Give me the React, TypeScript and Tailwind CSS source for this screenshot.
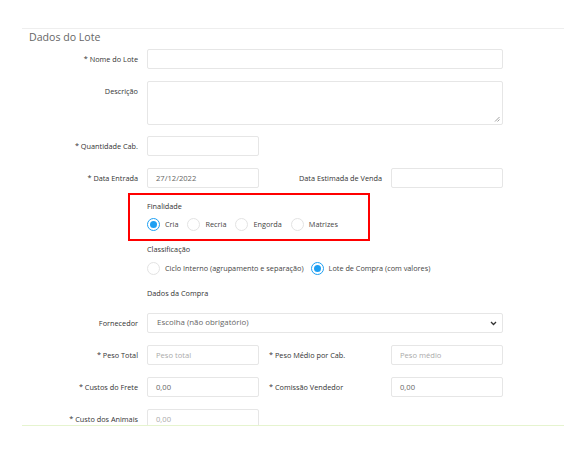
import * as React from "react"

const font = { fontFamily: '"Open Sans", "Noto Sans", sans-serif' }

function Label({ children, className = "" }: { children: React.ReactNode; className?: string }) {
  return (
    <div className={`w-[116px] shrink-0 text-right text-[7.3px] leading-[20px] text-[#333] ${className}`}>
      {children}
    </div>
  )
}

function Input({ value, placeholder, className = "w-[112px]" }: { value?: string; placeholder?: string; className?: string }) {
  return (
    <div
      className={`h-[20px] shrink-0 rounded-[2px] border border-[#e6e6e6] bg-white pl-[8px] text-[7.6px] leading-[18px] ${className} ${
        value ? "text-[#666]" : "text-[#aaa]"
      }`}
    >
      {value ?? placeholder}
    </div>
  )
}

function Radio({ label, checked = false }: { label: string; checked?: boolean }) {
  return (
    <div className="flex items-center">
      <span
        className={`flex h-[13px] w-[13px] items-center justify-center rounded-full border ${
          checked ? "border-[#1e9ff2]" : "border-[#e3e3e3]"
        }`}
      >
        {checked && <span className="h-[7px] w-[7px] rounded-full bg-[#1e9ff2]" />}
      </span>
      <span className="ml-[5px] text-[7.3px] text-[#444]">{label}</span>
    </div>
  )
}

export default function App() {
  return (
    <div className="relative h-[454px] w-[564px] overflow-hidden bg-white" style={font}>
      <div className="pl-[22px] pt-[28px]">
        <div className="h-[398px] overflow-hidden border-b border-t border-b-[#e6f4cf] border-t-[#eeeeee]">
          <div className="h-[16px] pl-[7px] text-[10.6px] leading-[16px] text-[#666]">Dados do Lote</div>

          <div className="mt-[4px] flex gap-[9px]">
            <Label>* Nome do Lote</Label>
            <Input className="w-[356px]" />
          </div>

          <div className="mt-[12px] flex gap-[9px]">
            <Label>Descrição</Label>
            <div className="relative h-[44px] w-[356px] rounded-[2px] border border-[#e6e6e6]">
              <svg className="absolute bottom-[2px] right-[2px]" width="6" height="6" viewBox="0 0 6 6">
                <path d="M5.5 1 L1 5.5 M5.5 3.5 L3.5 5.5" stroke="#888" strokeWidth="0.8" />
              </svg>
            </div>
          </div>

          <div className="mt-[11px] flex gap-[9px]">
            <Label>* Quantidade Cab.</Label>
            <Input />
          </div>

          <div className="mt-[12px] flex gap-[9px]">
            <Label>* Data Entrada</Label>
            <Input value="27/12/2022" />
            <div className="w-[114px] shrink-0 pl-[31px] text-[7.3px] leading-[20px] text-[#333]">Data Estimada de Venda</div>
            <Input />
          </div>

          <div className="ml-[125px]">
            <div className="mt-[12px] h-[12px] text-[7.3px] leading-[12px] text-[#333]">Finalidade</div>
            <div className="mt-[6px] flex gap-[9px]">
              <Radio label="Cria" checked />
              <Radio label="Recria" />
              <Radio label="Engorda" />
              <Radio label="Matrizes" />
            </div>
            <div className="mt-[12px] h-[12px] text-[7.3px] leading-[12px] text-[#333]">Classificação</div>
            <div className="mt-[7px] flex gap-[7px]">
              <Radio label="Ciclo Interno (agrupamento e separação)" />
              <Radio label="Lote de Compra (com valores)" checked />
            </div>
            <div className="mt-[12px] h-[12px] text-[7.3px] leading-[12px] text-[#333]">Dados da Compra</div>
          </div>

          <div className="mt-[14px] flex gap-[9px]">
            <Label>Fornecedor</Label>
            <div className="flex h-[20px] w-[356px] items-center justify-between rounded-[2px] border border-[#e6e6e6] pl-[9px] pr-[5px] text-[7.9px] text-[#666]">
              <span>Escolha (não obrigatório)</span>
              <svg width="7" height="5" viewBox="0 0 7 5">
                <path d="M1 1 L3.5 3.5 L6 1" fill="none" stroke="#333" strokeWidth="1.3" />
              </svg>
            </div>
          </div>

          <div className="mt-[12px] flex gap-[9px]">
            <Label>* Peso Total</Label>
            <Input placeholder="Peso total" />
            <div className="w-[114px] shrink-0 pl-[1px] text-[7.3px] leading-[20px] text-[#333]">* Peso Médio por Cab.</div>
            <Input placeholder="Peso médio" />
          </div>

          <div className="mt-[12px] flex gap-[9px]">
            <Label>* Custos do Frete</Label>
            <Input value="0,00" />
            <div className="w-[114px] shrink-0 pl-[1px] text-[7.3px] leading-[20px] text-[#333]">* Comissão Vendedor</div>
            <Input value="0,00" />
          </div>

          <div className="mt-[12px] flex gap-[9px]">
            <Label>* Custo dos Animais</Label>
            <Input placeholder="0,00" />
          </div>
        </div>
      </div>

      <div className="absolute left-[128px] top-[193px] h-[48px] w-[242px] border-2 border-[#ff0000]" />
    </div>
  )
}
